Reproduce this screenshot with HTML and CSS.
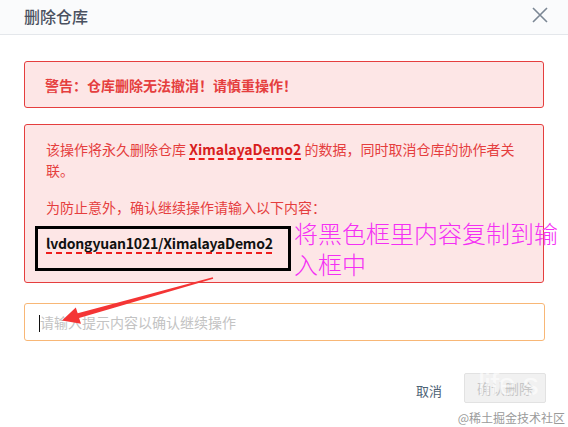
FILE: index.html
```html
<!DOCTYPE html>
<html lang="zh-CN">
<head>
<meta charset="utf-8">
<title>删除仓库</title>
<link rel="stylesheet" href="styles.css">
</head>
<body>
<div class="dialog">
  <header class="dialog-header">
    <h1 class="dialog-title">删除仓库</h1>
    <button class="close-btn" aria-label="关闭">
      <svg width="16" height="16" viewBox="0 0 16 16"><path d="M1 1 L15 15 M15 1 L1 15" stroke="#7b8794" stroke-width="1.6" fill="none"/></svg>
    </button>
  </header>

  <main class="dialog-body">
    <div class="alert alert-warning">警告：仓库删除无法撤消！请慎重操作！</div>

    <div class="alert alert-info">
      <p class="info-text">该操作将永久删除仓库 <strong class="dashed">XimalayaDemo2</strong> 的数据，同时取消仓库的协作者关联。</p>
      <p class="info-text">为防止意外，确认继续操作请输入以下内容：</p>
      <div class="code-box"><strong class="dashed code-text">lvdongyuan1021/XimalayaDemo2</strong></div>
    </div>

    <div class="input-wrap">
      <input class="confirm-input" type="text" placeholder="请输入提示内容以确认继续操作">
      <span class="caret"></span>
    </div>

    <div class="dialog-footer">
      <button class="btn-cancel">取消</button>
      <button class="btn-confirm" disabled>确认删除</button>
    </div>
  </main>

  <div class="annotation">将黑色框里内容复制到输入框中</div>
  <svg class="arrow" width="568" height="427" viewBox="0 0 568 427">
    <polygon fill="#f43535" points="212.8,277.3 77.7,313.3 75.8,307.6 62,320.5 81,323.8 79.1,318.1 213.2,278.7"/>
  </svg>
  <div class="wm-life">life s</div>
  <div class="wm-juejin">@稀土掘金技术社区</div>
</div>
</body>
</html>
```

FILE: styles.css
```css
* { box-sizing: border-box; }
html, body { margin: 0; padding: 0; background: #fff; }
body {
  font-family: "Noto Sans CJK SC", "Microsoft YaHei", sans-serif;
  font-size: 14px;
  color: #333;
}
.dialog {
  position: relative;
  width: 568px;
  height: 427px;
  overflow: hidden;
}
.dialog-header {
  height: 35px;
  background: #fafbfc;
  border-bottom: 1px solid #e4e7eb;
  display: flex;
  align-items: center;
  justify-content: space-between;
  padding: 0 20px 3px 24px;
}
.dialog-title {
  margin: 0;
  font-size: 16px;
  font-weight: 500;
  color: #4a5160;
  line-height: 20px;
}
.close-btn {
  border: 0;
  background: none;
  padding: 0;
  width: 16px;
  height: 16px;
  display: flex;
  margin-top: -2px;
}
.dialog-body {
  padding: 26px 24px 0 24px;
}
.alert {
  background: #fde6e6;
  border: 1px solid #e53e3e;
  border-radius: 3px;
  color: #e53e3e;
}
.alert-warning {
  height: 47px;
  display: flex;
  align-items: center;
  padding: 0 20px 0 20px;
  font-weight: bold;
  font-size: 14px;
}
.alert-info {
  margin-top: 16px;
  height: 159px;
  padding: 14px 20px 0 21px;
}
.info-text {
  margin: 0 0 16px 0;
  line-height: 21px;
}
.info-text + .info-text { margin-bottom: 8px; }
.dashed {
  font-weight: bold;
  text-decoration-line: underline;
  text-decoration-style: dashed;
  text-decoration-color: #ee1c1c;
  text-decoration-thickness: 2px;
  text-underline-offset: 3px;
}
.alert-info .dashed { color: #d81e1e; }
.code-box {
  margin-left: -11px;
  width: 256px;
  height: 45px;
  border: 3px solid #000;
  padding: 4px 8px 0 8px;
  line-height: 21px;
}
.code-box .code-text { color: #111; letter-spacing: -0.2px; }
.input-wrap {
  position: relative;
  margin-top: 20px;
}
.confirm-input {
  display: block;
  width: 521px;
  height: 38px;
  border: 1px solid #f8b776;
  border-radius: 3px;
  padding: 0 15px;
  font-family: inherit;
  font-size: 14px;
  outline: none;
  background: #fff;
}
.confirm-input::placeholder { color: #c3c3c3; }
.caret {
  position: absolute;
  left: 15px;
  top: 12px;
  width: 1px;
  height: 17px;
  background: #111;
}
.dialog-footer {
  margin-top: 32px;
  display: flex;
  justify-content: flex-end;
  align-items: center;
  gap: 22px;
  margin-right: -2px;
}
.btn-cancel {
  border: 0;
  background: none;
  padding: 0;
  font-family: inherit;
  font-size: 13px;
  color: #4d6275;
  margin-top: 4px;
}
.btn-confirm {
  width: 82px;
  height: 30px;
  border: 1px solid #e2e2e2;
  border-radius: 2px;
  background: #f1f1f1;
  color: #c6c6c6;
  font-family: inherit;
  font-size: 14px;
}
.annotation {
  position: absolute;
  left: 294px;
  top: 217px;
  width: 270px;
  font-size: 24px;
  line-height: 31px;
  color: #f42ff4;
  font-weight: 300;
}
.arrow {
  position: absolute;
  left: 0;
  top: 0;
  pointer-events: none;
}
.wm-life {
  position: absolute;
  left: 478px;
  top: 366px;
  font-family: "Liberation Sans", sans-serif;
  font-size: 32px;
  letter-spacing: -1px;
  color: rgba(255,255,255,0.6);
  pointer-events: none;
}
.wm-juejin {
  position: absolute;
  right: 3px;
  top: 410px;
  font-size: 12px;
  line-height: 15px;
  color: #9a9a9a;
  pointer-events: none;
}
```
